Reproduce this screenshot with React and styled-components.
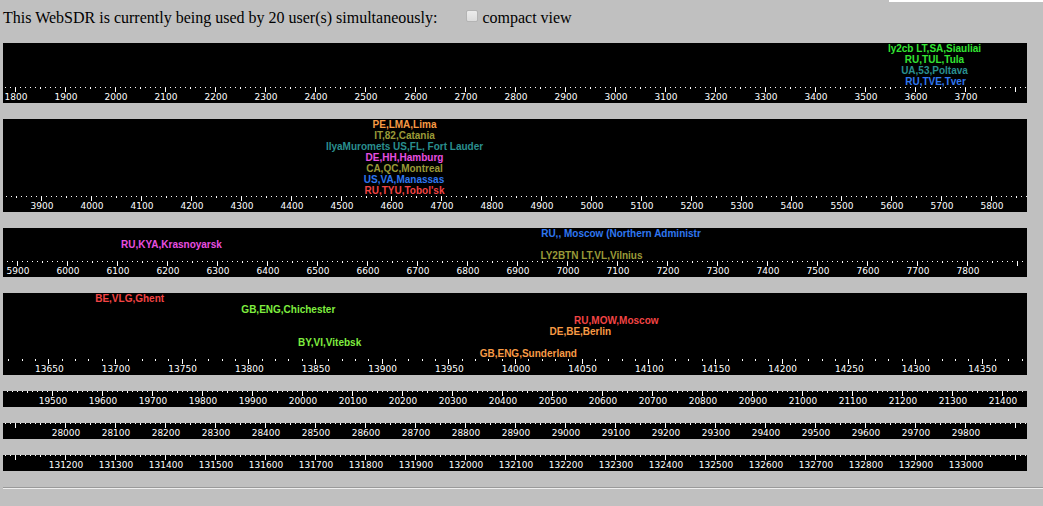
import styled, { createGlobalStyle } from "styled-components";
import { useState } from "react";

const GlobalStyle = createGlobalStyle`
  body {
    margin: 0;
    background-color: #c0c0c0;
    color: #000;
    font-family: "Liberation Serif", serif;
    font-size: 16px;
    line-height: 18px;
  }
`;

const TopStrip = styled.div`
  margin-left: auto;
  width: 154px;
  height: 2px;
  background-color: #fff;
`;

const Page = styled.main`
  padding: 7px 0 0 3px;
`;

const StatusLine = styled.div`
  display: flex;
  align-items: center;
  gap: 29px;
  margin-bottom: 16px;
`;

const CompactLabel = styled.label`
  display: flex;
  gap: 4px;
`;

const CompactCheckbox = styled.input`
  appearance: none;
  margin: 1px 0 0;
  width: 12px;
  height: 12px;
  border: 1px solid #b4b4b4;
  border-radius: 2px;
  background: linear-gradient(#ececec, #dcdcdc);

  &:checked {
    background: #555;
  }
`;

const BandList = styled.div`
  display: flex;
  flex-direction: column;
  gap: 16px;
  margin-right: 16px;
`;

const BandWrapper = styled.section`
  background-color: #000;
  overflow: hidden;
`;

const UserRow = styled.div`
  position: relative;
  height: 11px;
`;

const UserName = styled.span`
  position: absolute;
  width: 240px;
  margin-left: -120px;
  color: ${(props) => props.$color};
  font-family: "Liberation Sans", sans-serif;
  font-size: 10px;
  font-weight: bold;
  line-height: 12px;
  text-align: center;
  white-space: nowrap;
`;

const ScaleWrapper = styled.div`
  position: relative;
  height: 16px;
`;

const Ticks = styled.svg`
  display: block;
  width: 100%;
  height: 5px;
`;

const Frequency = styled.span`
  position: absolute;
  top: 5px;
  width: 40px;
  margin-left: -19px;
  color: #fff;
  font-family: "DejaVu Sans", sans-serif;
  font-size: 9px;
  line-height: 10px;
  text-align: center;
`;

const Divider = styled.hr`
  margin: 16px 0 0;
  border: 0;
  border-top: 1px solid #9a9a9a;
  border-bottom: 1px solid #eee;
`;

const GREEN = "#33e533";
const LIME = "#7fee3f";
const TEAL = "#2a8f8f";
const BLUE = "#2f77f0";
const ORANGE = "#f79a45";
const OLIVE = "#9a9a38";
const PINK = "#e84fe0";
const RED = "#f24444";

// start and span in kHz; every entry of rows is one line of listeners
const bands = [
  {
    start: 1776,
    span: 2048,
    major: 100,
    rows: [
      [{ name: "ly2cb LT,SA,Siauliai", freq: 3639, color: GREEN }],
      [{ name: "RU,TUL,Tula", freq: 3639, color: GREEN }],
      [{ name: "UA,53,Poltava", freq: 3639, color: TEAL }],
      [{ name: "RU,TVE,Tver", freq: 3641, color: BLUE }],
    ],
  },
  {
    start: 3824,
    span: 2048,
    major: 100,
    rows: [
      [{ name: "PE,LMA,Lima", freq: 4627, color: ORANGE }],
      [{ name: "IT,82,Catania", freq: 4627, color: OLIVE }],
      [{ name: "IlyaMuromets US,FL, Fort Lauder", freq: 4627, color: TEAL }],
      [{ name: "DE,HH,Hamburg", freq: 4627, color: PINK }],
      [{ name: "CA,QC,Montreal", freq: 4627, color: OLIVE }],
      [{ name: "US,VA,Manassas", freq: 4626, color: BLUE }],
      [{ name: "RU,TYU,Tobol'sk", freq: 4627, color: RED }],
    ],
  },
  {
    start: 5872,
    span: 2048,
    major: 100,
    rows: [
      [{ name: "RU,, Moscow (Northern Administr", freq: 7108, color: BLUE }],
      [{ name: "RU,KYA,Krasnoyarsk", freq: 6209, color: PINK }],
      [{ name: "LY2BTN LT,VL,Vilnius", freq: 7049, color: OLIVE }],
    ],
  },
  {
    start: 13616,
    span: 768,
    major: 50,
    rows: [
      [{ name: "BE,VLG,Ghent", freq: 13711, color: RED }],
      [{ name: "GB,ENG,Chichester", freq: 13830, color: LIME }],
      [{ name: "RU,MOW,Moscow", freq: 14076, color: RED }],
      [{ name: "DE,BE,Berlin", freq: 14049, color: ORANGE }],
      [{ name: "BY,VI,Vitebsk", freq: 13861, color: LIME }],
      [{ name: "GB,ENG,Sunderland", freq: 14010, color: ORANGE }],
    ],
  },
  { start: 19402, span: 2048, major: 100, rows: [] },
  { start: 27876, span: 2048, major: 100, rows: [] },
  { start: 131076, span: 2048, major: 100, rows: [] },
];

const percent = (band, freq) => `${((freq - band.start) / band.span) * 100}%`;

function getTicks(band) {
  const ticks = [];
  const first = Math.ceil(band.start / 10) * 10;
  for (let freq = first; freq < band.start + band.span; freq += 10) {
    ticks.push(freq);
  }
  return ticks;
}

function tickHeight(band, freq) {
  if (freq % band.major === 0) return 5;
  // the zoomed-in band has no half ticks, all of its small ones are longer
  if (band.major === 50 || freq % 50 === 0) return 2;
  return 1;
}

// a number is only written when it fits inside the band
function hasLabel(band, freq) {
  if (freq % band.major !== 0) return false;
  const half = (String(freq).length * 3 * band.span) / 1024;
  return freq - half >= band.start && freq + half < band.start + band.span;
}

function Scale({ band }) {
  const ticks = getTicks(band);
  return (
    <ScaleWrapper>
      <Ticks shapeRendering="crispEdges" aria-hidden="true">
        {ticks.map((freq) => (
          <rect
            key={freq}
            x={percent(band, freq)}
            y="0"
            width="1"
            height={tickHeight(band, freq)}
            fill="#fff"
          />
        ))}
      </Ticks>
      {ticks
        .filter((freq) => hasLabel(band, freq))
        .map((freq) => (
          <Frequency key={freq} style={{ left: percent(band, freq) }}>
            {freq}
          </Frequency>
        ))}
    </ScaleWrapper>
  );
}

function Band({ band, isCompact }) {
  return (
    <BandWrapper>
      {!isCompact &&
        band.rows.map((users, index) => (
          <UserRow key={index}>
            {users.map((user) => (
              <UserName
                key={user.name}
                $color={user.color}
                style={{ left: percent(band, user.freq) }}
              >
                {user.name}
              </UserName>
            ))}
          </UserRow>
        ))}
      <Scale band={band} />
    </BandWrapper>
  );
}

export default function App() {
  const [isCompact, setIsCompact] = useState(false);
  const userCount = bands.reduce((sum, band) => sum + band.rows.length, 0);

  const handleCompactChange = (e) => setIsCompact(e.target.checked);

  return (
    <>
      <GlobalStyle />
      <TopStrip />
      <Page>
        <StatusLine>
          <span>
            This WebSDR is currently being used by {userCount} user(s)
            simultaneously:
          </span>
          <CompactLabel>
            <CompactCheckbox
              type="checkbox"
              checked={isCompact}
              onChange={handleCompactChange}
            />
            compact view
          </CompactLabel>
        </StatusLine>
        <BandList>
          {bands.map((band) => (
            <Band key={band.start} band={band} isCompact={isCompact} />
          ))}
        </BandList>
        <Divider />
      </Page>
    </>
  );
}
